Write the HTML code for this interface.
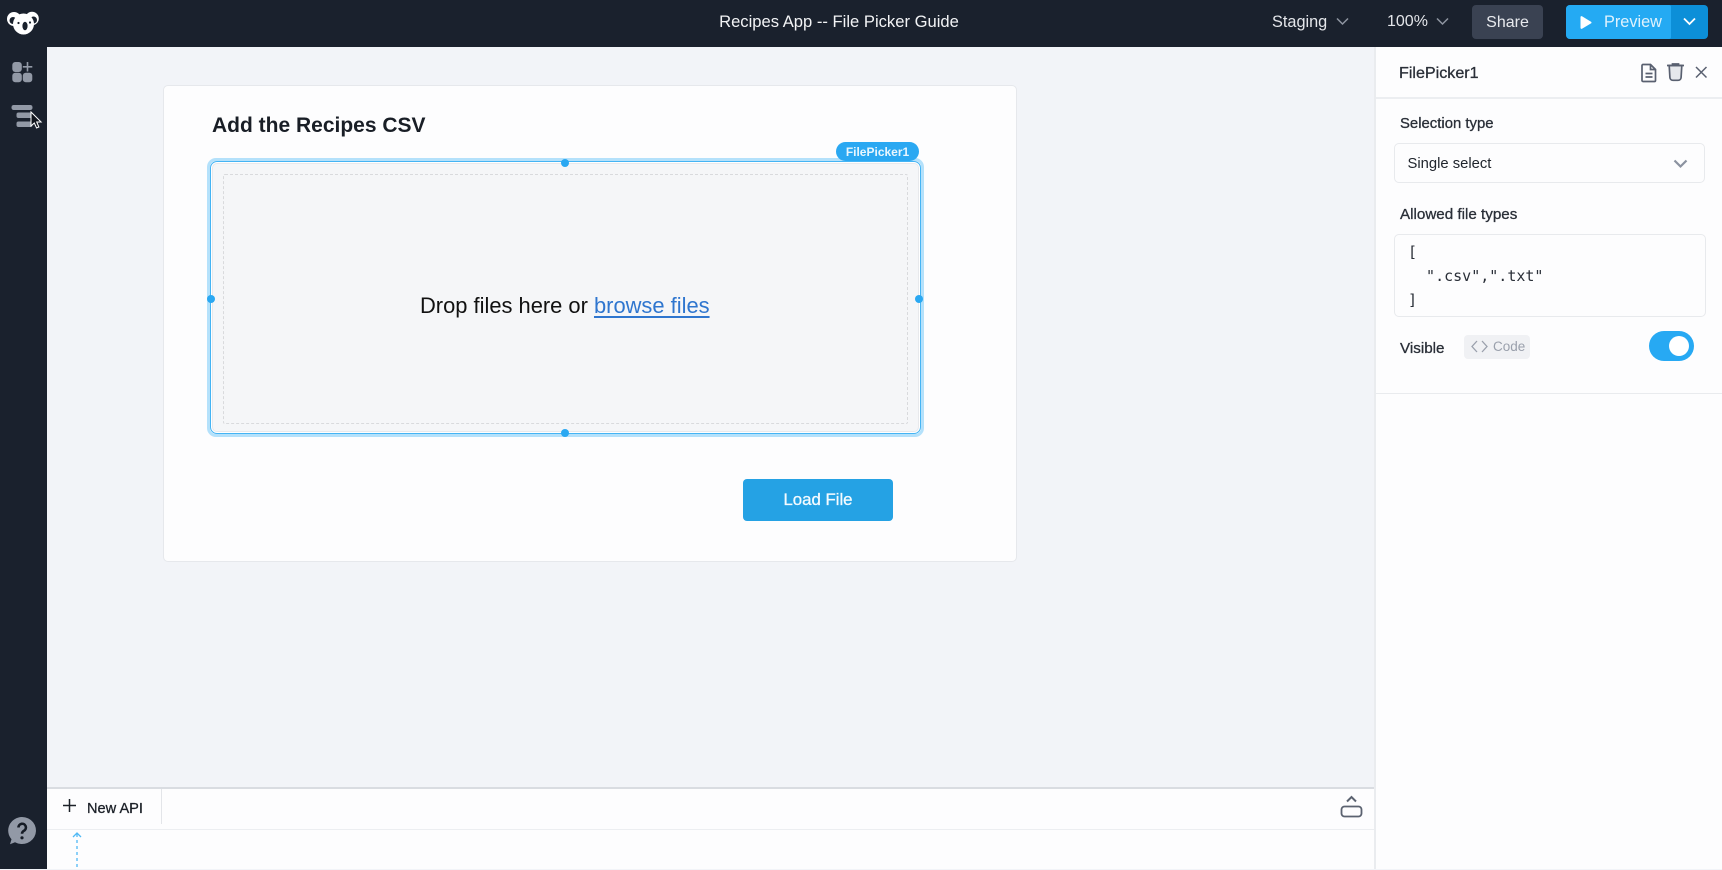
<!DOCTYPE html>
<html><head><meta charset="utf-8"><title>Recipes App</title>
<style>
html,body{margin:0;padding:0;width:1722px;height:869px;overflow:hidden;background:#f2f4f8;font-family:"Liberation Sans",sans-serif;color:#1c2128}
.a{position:absolute;box-sizing:border-box}
.t{position:absolute;white-space:nowrap;line-height:1}
.m{-webkit-text-stroke:.3px currentColor}
svg{position:absolute;overflow:visible}
.h{position:absolute;width:8px;height:8px;border-radius:50%;background:#2aa8f2}
</style></head><body>
<!-- top bar + sidebar -->
<div class="a" style="left:0;top:0;width:1722px;height:47px;background:#1a212d"></div>
<div class="a" style="left:0;top:0;width:47px;height:869px;background:#1a212d"></div>
<!-- logo -->
<svg style="left:0;top:0" width="47" height="47" viewBox="0 0 47 47">
<circle cx="14" cy="19" r="7" fill="#fff"/><circle cx="32" cy="18.500" r="6.800" fill="#fff"/>
<circle cx="13" cy="20.500" r="3.500" fill="#1a212d"/><circle cx="33.500" cy="20" r="3.500" fill="#1a212d"/>
<ellipse cx="23.500" cy="24" rx="10.500" ry="10.500" fill="#fff"/>
<ellipse cx="25" cy="26" rx="2.600" ry="4.300" fill="#1a212d"/>
<circle cx="18.500" cy="23" r="1.100" fill="#1a212d"/><circle cx="30" cy="22.500" r="1.100" fill="#1a212d"/>
</svg>
<!-- sidebar icons -->
<svg style="left:0;top:50px" width="47" height="90" viewBox="0 50 47 90">
<rect x="12.300" y="62" width="9.500" height="10" rx="3" fill="#9299a6"/>
<rect x="12.300" y="72.800" width="9.500" height="9.500" rx="3" fill="#9299a6"/>
<rect x="22.800" y="72.800" width="9.500" height="9.500" rx="3" fill="#9299a6"/>
<path d="M27.500 62v9.500M22.800 66.800h9.500" stroke="#9299a6" stroke-width="1.600" fill="none"/>
<rect x="11.500" y="105" width="21" height="5" rx="2.200" fill="#9299a6"/>
<rect x="16.500" y="112.500" width="16" height="5.500" rx="2" fill="#9299a6"/>
<rect x="16.500" y="121.500" width="16" height="5.500" rx="2" fill="#9299a6"/>
<path d="M31 112v14l3.300-3 2.300 5 2.300-1-2.200-5h4.400z" fill="#10141c" stroke="#fff" stroke-width="1"/>
</svg>
<svg style="left:0;top:810px" width="47" height="40" viewBox="0 810 47 40">
<path d="M22 817a14 13.500 0 1 1-7 25.200l-5 2 1.500-5A14 13.500 0 0 1 22 817z" fill="#9299a6"/>
<path d="M18.500 827.500a3.700 3.700 0 1 1 5.500 3.200c-1.300.8-2 1.400-2 3" fill="none" stroke="#161c26" stroke-width="2.600"/>
<circle cx="22" cy="837.800" r="1.600" fill="#161c26"/>
</svg>
<!-- top bar text -->
<div class="t" style="left:699px;top:14px;font-size:16.600px;color:#f2f3f5;width:280px;text-align:center">Recipes App -- File Picker Guide</div>
<div class="t" style="left:1272px;top:14px;font-size:16.300px;color:#e4e6ea">Staging</div>
<svg style="left:1336px;top:17px" width="13" height="9"><path d="M1 1.500l5.500 5.500 5.500-5.500" fill="none" stroke="#8f95a1" stroke-width="1.500"/></svg>
<div class="t" style="left:1387px;top:14px;font-size:16px;color:#e4e6ea">100%</div>
<svg style="left:1436px;top:17px" width="13" height="9"><path d="M1 1.500l5.500 5.500 5.500-5.500" fill="none" stroke="#8f95a1" stroke-width="1.500"/></svg>
<div class="a" style="left:1472px;top:5px;width:71px;height:34px;background:#3a4252;border-radius:4px"></div>
<div class="t" style="left:1472px;top:14.500px;width:71px;text-align:center;font-size:16px;color:#e8eaee">Share</div>
<div class="a" style="left:1566px;top:5px;width:142px;height:34px;background:#0c8fd8;border-radius:4px"></div>
<div class="a" style="left:1566px;top:5px;width:105px;height:34px;background:#24aaf3;border-radius:4px 2px 2px 4px"></div>
<svg style="left:1579px;top:15px" width="14" height="15"><path d="M1.500 2.200v10.600c0 .9.800 1.300 1.500.9l9-5.300c.7-.4.7-1.300 0-1.700L3 1.300c-.7-.4-1.500 0-1.500.9z" fill="#fff"/></svg>
<div class="t" style="left:1604px;top:14px;font-size:16.300px;color:#dff2fd">Preview</div>
<svg style="left:1683px;top:17px" width="13" height="9"><path d="M1 1.500l5.500 5.500 5.500-5.500" fill="none" stroke="#fff" stroke-width="1.800"/></svg>
<!-- card -->
<div class="a" style="left:163px;top:85px;width:854px;height:477px;background:#fdfdfe;border:1px solid #e6e8ec;border-radius:5px"></div>
<div class="t" style="left:212px;top:115px;font-size:21px;font-weight:700;color:#191e26">Add the Recipes CSV</div>
<!-- picker -->
<div class="a" style="left:207px;top:158px;width:717px;height:279px;border:3px solid #b4e1fb;border-radius:9px"></div>
<div class="a" style="left:210px;top:161px;width:711px;height:273px;border:1.500px solid #45b4f4;border-radius:7px;background:#fff"></div>
<div class="a" style="left:212px;top:163px;width:707px;height:269px;border:1px solid #e8e9ec;border-radius:5px;background:#f5f6f8"></div>
<div class="a" style="left:223px;top:174px;width:685px;height:250px;border:1px dashed #d9dadd;border-radius:2px"></div>
<div class="a" style="left:836px;top:142px;width:83px;height:19px;background:#2aa8f2;border-radius:10px"></div>
<div class="t" style="left:836px;top:146px;width:83px;text-align:center;font-size:12px;font-weight:700;color:#e8f6fe">FilePicker1</div>
<div class="h" style="left:561px;top:158.500px"></div>
<div class="h" style="left:207px;top:294.500px"></div>
<div class="h" style="left:915px;top:294.500px"></div>
<div class="h" style="left:561px;top:428.500px"></div>
<div class="t" style="left:420px;top:295px;font-size:21.900px;color:#111"><span>Drop files here or </span><span style="color:#2f76cf;text-decoration:underline;text-decoration-thickness:1.500px;text-underline-offset:3px">browse files</span></div>
<!-- load button -->
<div class="a" style="left:743px;top:479px;width:150px;height:42px;background:#25a2e4;border-radius:4px"></div>
<div class="t m" style="left:743px;top:492px;width:150px;text-align:center;font-size:16.800px;color:#f4fbff">Load File</div>
<!-- bottom bar -->
<div class="a" style="left:47px;top:787px;width:1328px;height:82px;background:#fdfdfe;border-top:2px solid #d9dce1"></div>
<div class="a" style="left:47px;top:829px;width:1328px;height:1px;background:#eceef1"></div>
<div class="a" style="left:161px;top:789px;width:1px;height:35px;background:#e3e5e9"></div>
<svg style="left:63px;top:799px" width="14" height="14"><path d="M6.500 0v13M0 6.500h13" stroke="#1c2128" stroke-width="1.500" fill="none"/></svg>
<div class="t m" style="left:87px;top:801.500px;font-size:14.600px;color:#1c2128">New API</div>
<svg style="left:1340px;top:794px" width="24" height="26"><path d="M7 7.500l4.500-4.500L16 7.500" fill="none" stroke="#5b6270" stroke-width="2"/><rect x="1.500" y="12.500" width="20" height="10" rx="3" fill="none" stroke="#5b6270" stroke-width="1.800"/></svg>
<svg style="left:70px;top:830px" width="14" height="40"><path d="M7 4v36" stroke="#4fb9f5" stroke-width="1.300" stroke-dasharray="3 3" fill="none"/><path d="M3 7l4-4 4 4" stroke="#4fb9f5" stroke-width="1.300" fill="none"/></svg>
<!-- right panel -->
<div class="a" style="left:1374px;top:47px;width:348px;height:822px;background:#fdfdfe;border-left:2px solid #eaecef"></div>
<div class="a" style="left:1376px;top:97px;width:346px;height:1.500px;background:#eceef1"></div>
<div class="a" style="left:1376px;top:392.500px;width:346px;height:1.500px;background:#e9ebee"></div>
<div class="t m" style="left:1399px;top:64.500px;font-size:16.100px;color:#2a2f38">FilePicker1</div>
<svg style="left:1640px;top:63px" width="18" height="20"><path d="M2 2.500a1 1 0 0 1 1-1h7.500l5 5V17.500a1 1 0 0 1-1 1H3a1 1 0 0 1-1-1zM10.500 1.500v5h5M5.500 10.500h7M5.500 14h7" fill="none" stroke="#596070" stroke-width="1.700"/></svg>
<svg style="left:1666px;top:62px" width="19" height="20"><path d="M3.200 3.500l.7 12a3 3 0 0 0 3 2.800h5.200a3 3 0 0 0 3-2.800l.7-12z" fill="#e6e8ec" stroke="#596070" stroke-width="1.700"/><path d="M1 3.500h17M6.500 3.500V2h6v1.500" fill="none" stroke="#596070" stroke-width="1.700"/></svg>
<svg style="left:1695px;top:66px" width="13" height="13"><path d="M1 1l10.500 10.500M11.500 1L1 11.500" stroke="#596070" stroke-width="1.500" fill="none"/></svg>
<div class="t m" style="left:1400px;top:116.500px;font-size:14.900px;color:#2a2f38">Selection type</div>
<div class="a" style="left:1394px;top:143px;width:311px;height:40px;border:1px solid #e8eaed;border-radius:5px"></div>
<div class="t" style="left:1407.500px;top:156.500px;font-size:14.800px;color:#20252d">Single select</div>
<svg style="left:1673px;top:158.500px" width="15" height="10"><path d="M1.500 1.500l6 6 6-6" fill="none" stroke="#8b92a0" stroke-width="2.200"/></svg>
<div class="t m" style="left:1400px;top:206.500px;font-size:15.200px;color:#2a2f38">Allowed file types</div>
<div class="a" style="left:1394px;top:234px;width:312px;height:83px;border:1px solid #e8eaed;border-radius:5px"></div>
<div class="t" style="left:1408px;top:240px;font-family:'DejaVu Sans Mono',monospace;font-size:15px;line-height:24px;color:#2a2f38;white-space:pre">[
  ".csv",".txt"
]</div>
<div class="t m" style="left:1400px;top:340.500px;font-size:15.200px;color:#2a2f38">Visible</div>
<div class="a" style="left:1464px;top:335px;width:66px;height:24px;background:#f0f1f4;border-radius:4px"></div>
<svg style="left:1471px;top:340px" width="17" height="13"><path d="M6 1L1 6.500 6 12M11 1l5 5.500L11 12" fill="none" stroke="#9aa0ac" stroke-width="1.300"/></svg>
<div class="t" style="left:1493px;top:340px;font-size:13.500px;color:#9aa0ac">Code</div>
<div class="a" style="left:1649px;top:331px;width:45px;height:30px;background:#27a9f3;border-radius:15px"></div>
<div class="a" style="left:1669px;top:336px;width:20px;height:20px;background:#fff;border-radius:50%"></div>
</body></html>
